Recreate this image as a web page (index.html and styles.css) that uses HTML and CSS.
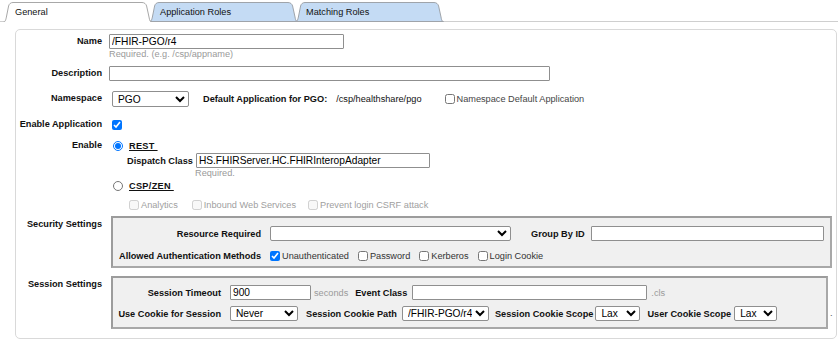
FILE: index.html
```html
<!DOCTYPE html>
<html>
<head>
<meta charset="utf-8">
<link rel="stylesheet" href="styles.css">
</head>
<body>
<div class="tabs">
  <div class="tab tab-active">
    <svg class="tab-shape" width="149" height="20" viewBox="0 0 149 20"><path d="M0.5,20 C2.5,20 3,17 3.6,14 L5.6,4 C6.1,2 7.6,0.5 10,0.5 L139,0.5 C141.5,0.5 143,2 143.6,4 L146,15 C146.6,18.5 147.2,20 148.5,20"/></svg>
    <span class="tab-label">General</span>
  </div>
  <div class="tab">
    <svg class="tab-shape" width="149" height="20" viewBox="0 0 149 20"><path d="M0.5,19.5 C2.5,19.5 3,17 3.6,14 L5.6,4 C6.1,2 7.6,0.5 10,0.5 L139,0.5 C141.5,0.5 143,2 143.6,4 L146,15 C146.6,18.5 147.2,19.5 148.5,19.5 Z"/></svg>
    <span class="tab-label">Application Roles</span>
  </div>
  <div class="tab">
    <svg class="tab-shape" width="149" height="20" viewBox="0 0 149 20"><path d="M0.5,19.5 C2.5,19.5 3,17 3.6,14 L5.6,4 C6.1,2 7.6,0.5 10,0.5 L139,0.5 C141.5,0.5 143,2 143.6,4 L146,15 C146.6,18.5 147.2,19.5 148.5,19.5 Z"/></svg>
    <span class="tab-label">Matching Roles</span>
  </div>
</div>

<div class="panel">
  <div class="row row-name">
    <div class="lbl">Name</div>
    <div class="cell">
      <input class="txt w-name" value="/FHIR-PGO/r4">
      <div class="hint">Required. (e.g. /csp/appname)</div>
    </div>
  </div>

  <div class="row row-desc">
    <div class="lbl">Description</div>
    <div class="cell"><input class="txt w-desc" value=""></div>
  </div>

  <div class="row row-ns">
    <div class="lbl">Namespace</div>
    <div class="cell line">
      <select class="sel w-ns"><option>PGO</option></select>
      <span class="bold def-app">Default Application for PGO:</span>
      <span class="def-path">/csp/healthshare/pgo</span>
      <label class="chk ns-def"><input type="checkbox" class="cb"><span>Namespace Default Application</span></label>
    </div>
  </div>

  <div class="row row-ea">
    <div class="lbl">Enable Application</div>
    <div class="cell line"><input type="checkbox" class="cb cb-ea" checked></div>
  </div>

  <div class="row row-en">
    <div class="lbl">Enable</div>
    <div class="cell">
      <div class="radio-line"><input type="radio" name="en" class="rb" checked><span class="opt">REST&nbsp;</span></div>
      <div class="disp-line"><span class="bold">Dispatch Class</span><input class="txt w-disp" value="HS.FHIRServer.HC.FHIRInteropAdapter"></div>
      <div class="hint disp-hint">Required.</div>
      <div class="radio-line radio-csp"><input type="radio" name="en" class="rb"><span class="opt">CSP/ZEN&nbsp;</span></div>
      <div class="dis-line">
        <label class="chk dis"><input type="checkbox" class="cb" disabled><span>Analytics</span></label>
        <label class="chk dis"><input type="checkbox" class="cb" disabled><span>Inbound Web Services</span></label>
        <label class="chk dis"><input type="checkbox" class="cb" disabled><span>Prevent login CSRF attack</span></label>
      </div>
    </div>
  </div>

  <div class="row row-sec">
    <div class="lbl lbl-box">Security Settings</div>
    <div class="cell">
      <div class="box sec-box">
        <div class="box-line">
          <div class="blbl sec-lbl">Resource Required</div>
          <select class="sel w-res"><option></option></select>
          <span class="bold group-lbl">Group By ID</span>
          <input class="txt w-group" value="">
        </div>
        <div class="box-line box-line2">
          <div class="blbl sec-lbl">Allowed Authentication Methods</div>
          <div class="auth">
            <label class="chk"><input type="checkbox" class="cb" checked><span>Unauthenticated</span></label>
            <label class="chk"><input type="checkbox" class="cb"><span>Password</span></label>
            <label class="chk"><input type="checkbox" class="cb"><span>Kerberos</span></label>
            <label class="chk"><input type="checkbox" class="cb"><span>Login Cookie</span></label>
          </div>
        </div>
      </div>
    </div>
  </div>

  <div class="row row-ses">
    <div class="lbl lbl-box">Session Settings</div>
    <div class="cell ses-cell">
      <div class="box ses-box">
        <div class="box-line">
          <div class="blbl ses-lbl">Session Timeout</div>
          <input class="txt w-timeout" value="900">
          <span class="unit">seconds</span>
          <span class="bold ev-lbl">Event Class</span>
          <input class="txt w-event" value="">
          <span class="unit cls">.cls</span>
        </div>
        <div class="box-line box-line2b">
          <div class="blbl ses-lbl">Use Cookie for Session</div>
          <select class="sel w-never"><option>Never</option></select>
          <span class="bold ck-lbl">Session Cookie Path</span>
          <select class="sel w-path"><option>/FHIR-PGO/r4/</option></select>
          <span class="bold ck-lbl2">Session Cookie Scope</span>
          <select class="sel w-lax"><option>Lax</option></select>
          <span class="bold ck-lbl3">User Cookie Scope</span>
          <select class="sel w-lax2"><option>Lax</option></select>
        </div>
      </div>
      <span class="trail">.</span>
    </div>
  </div>
</div>
</body>
</html>
```

FILE: styles.css
```css
html, body {
  margin: 0;
  padding: 0;
  background: #ffffff;
}
body {
  width: 838px;
  height: 340px;
  overflow: hidden;
  font-family: "Liberation Sans", Arial, sans-serif;
  font-size: 9.2px;
  color: #000;
}

/* ---------- tabs ---------- */
.tabs {
  display: flex;
  height: 21px;
  padding-left: 3px;
  border-bottom: 1px solid #cfcfcf;
}
.tab {
  position: relative;
  width: 149px;
  height: 20px;
  margin-top: 2px;
  flex: none;
  display: flex;
  align-items: center;
}
.tab + .tab {
  margin-left: -3px;
}
.tab-shape {
  position: absolute;
  left: 0;
  top: 0;
  z-index: 0;
}
.tab-shape path {
  fill: #c4dbf4;
  stroke: #9fa4aa;
  stroke-width: 1;
}
.tab-active {
  z-index: 3;
}
.tab-active .tab-shape path {
  fill: #ffffff;
  stroke: #a8a8a8;
}
.tab:nth-child(2) { z-index: 2; }
.tab:nth-child(3) { z-index: 1; }
.tab-label {
  position: relative;
  z-index: 1;
  padding-left: 11px;
  padding-bottom: 1px;
  font-size: 9.2px;
  color: #111;
}
.tab-active .tab-label {
  padding-left: 12px;
}

/* ---------- panel ---------- */
.panel {
  margin: 7px 0 0 15px;
  width: 822px;
  box-sizing: border-box;
  border: 1px solid #d9d9d9;
  border-radius: 5px;
  padding: 4px 0 9px 0;
}
.row {
  display: flex;
  align-items: flex-start;
}
.lbl {
  width: 86px;
  flex: none;
  margin-right: 7px;
  text-align: right;
  font-weight: bold;
  line-height: 15px;
  white-space: nowrap;
  color: #111;
}
.lbl-box {
  line-height: 13px;
  padding-top: 2px;
}
.cell {
  flex: 1;
  min-width: 0;
}
.line {
  display: flex;
  align-items: center;
  height: 15px;
}
.bold {
  font-weight: bold;
  color: #111;
  white-space: nowrap;
}

.row-desc { margin-top: 6px; }
.row-ns { margin-top: 10px; }
.row-ns .line { height: 16px; }
.row-ea { margin-top: 10px; }
.row-en { margin-top: 6px; }
.row-sec { margin-top: 4px; }
.row-ses { margin-top: 8px; }

/* ---------- controls ---------- */
.txt {
  display: block;
  box-sizing: border-box;
  height: 15px;
  margin: 0;
  padding: 0 2px;
  border: 1px solid #8f8f8f;
  border-radius: 1px;
  background: #fff;
  font-family: "Liberation Sans", Arial, sans-serif;
  font-size: 10.2px;
  color: #000;
  outline: none;
}
.sel {
  display: block;
  box-sizing: border-box;
  height: 15px;
  margin: 0;
  padding: 0 0 0 1px;
  border: 1px solid #8f8f8f;
  border-radius: 2px;
  background: #fff;
  font-family: "Liberation Sans", Arial, sans-serif;
  font-size: 10.2px;
  color: #000;
}
.cb {
  width: 10px;
  height: 10px;
  margin: 0 2px 0 3px;
  flex: none;
}
.rb {
  width: 10px;
  height: 10px;
  margin: 0 6px 0 4px;
  flex: none;
}
.chk {
  display: inline-flex;
  align-items: center;
  white-space: nowrap;
  color: #333;
}

.w-name { width: 235px; }
.hint {
  line-height: 11px;
  color: #9a9a9a;
  white-space: nowrap;
}
.w-desc { width: 441px; }

.w-ns { width: 77px; height: 16px; margin-left: 3px; }
.def-app { margin-left: 14px; }
.def-path { margin-left: 9px; color: #111; white-space: nowrap; }
.ns-def { margin-left: 20px; color: #444; }

.cb-ea { margin-left: 3px; }

/* ---------- enable ---------- */
.radio-line {
  display: flex;
  align-items: center;
  height: 15px;
}
.radio-csp {
  height: 14px;
}
.opt {
  font-weight: bold;
  text-decoration: underline;
  letter-spacing: 0.3px;
  color: #111;
}
.disp-line {
  display: flex;
  align-items: center;
  height: 15px;
  padding-left: 18px;
}
.disp-line .bold {
  margin-right: 3px;
}
.w-disp { width: 234px; }
.disp-hint { padding-left: 86px; }
.dis-line {
  display: flex;
  align-items: center;
  height: 15px;
  margin-top: 4px;
  padding-left: 17px;
}
.dis-line .chk {
  margin-right: 11px;
  color: #a0a0a0;
}
.dis-line .chk + .chk + .chk {
  margin-left: -2px;
}

/* ---------- boxes ---------- */
.box {
  box-sizing: border-box;
  margin-left: 2px;
  background: #f0f0f0;
  border: 2px solid #a8a8a8;
  border-top-color: #9c9c9c;
  border-left-color: #9c9c9c;
}
.sec-box {
  padding: 8px 0 3px 6px;
  width: 721px;
}
.ses-box {
  padding: 7px 0 6px 5px;
  width: 717px;
}
.box-line {
  display: flex;
  align-items: center;
  height: 15px;
}
.box-line2 { margin-top: 7px; }
.box-line2b { margin-top: 6px; }
.blbl {
  flex: none;
  text-align: right;
  font-weight: bold;
  white-space: nowrap;
  color: #111;
  margin-right: 9px;
}
.sec-lbl { width: 142px; }
.ses-lbl { width: 103px; }

.w-res { width: 241px; }
.group-lbl { margin-left: 20px; margin-right: 6px; }
.w-group { width: 233px; }
.auth {
  display: flex;
  align-items: center;
  margin-left: -3px;
}
.auth .chk { margin-right: 6px; }

.w-timeout { width: 81px; }
.unit { color: #9a9a9a; margin-left: 3px; }
.ev-lbl { margin-left: 7px; margin-right: 5px; }
.w-event { width: 235px; }
.cls { margin-left: 4px; }

.w-never { width: 68px; }
.ck-lbl { margin-left: 8px; margin-right: 5px; }
.w-path { width: 87px; }
.ck-lbl2 { margin-left: 6px; margin-right: 2px; }
.w-lax { width: 45px; }
.ck-lbl3 { margin-left: 7px; margin-right: 3px; }
.w-lax2 { width: 43px; }

.ses-cell {
  display: flex;
  align-items: flex-start;
}
.trail {
  margin-left: 2px;
  margin-top: 32px;
  line-height: 10px;
  color: #555;
}
```
